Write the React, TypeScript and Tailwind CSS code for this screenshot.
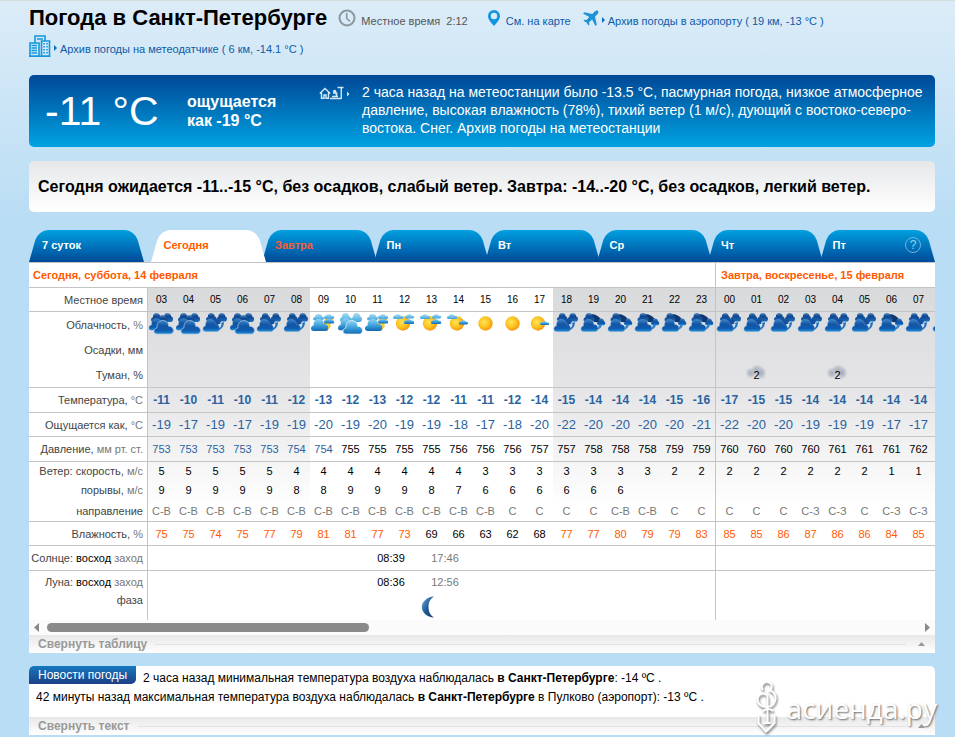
import React, { useState } from 'react';

type Sky = 'overcast' | 'cloudy' | 'broken' | 'dayOvercast' | 'dayCloudy' | 'sunHazy' | 'sunPartly' | 'sun' | 'sunSmall';

interface Hour {
    hour: string;
    sky: Sky;
    fog?: string;
    temp: string;
    feels: string;
    pressure: string;
    wind: string;
    gust: string;
    dir: string;
    humidity: string;
}

const TABS = ['7 суток', 'Сегодня', 'Завтра', 'Пн', 'Вт', 'Ср', 'Чт', 'Пт'];

const list = (s: string) => s.split(' ');

const HOURS = list('03 04 05 06 07 08 09 10 11 12 13 14 15 16 17 18 19 20 21 22 23 00 01 02 03 04 05 06 07');
const TEMPS = list('-11 -10 -11 -10 -11 -12 -13 -12 -13 -12 -12 -11 -11 -12 -14 -15 -14 -14 -14 -15 -16 -17 -15 -15 -14 -14 -14 -14 -14');
const FEELS = list('-19 -17 -19 -17 -19 -19 -20 -19 -20 -19 -19 -18 -17 -18 -20 -22 -20 -20 -20 -20 -21 -22 -20 -20 -19 -19 -19 -17 -17');
const PRESSURE = list('753 753 753 753 753 754 754 755 755 755 755 756 756 756 757 757 758 758 758 759 759 760 760 760 760 761 761 761 762');
const WIND = list('5 5 5 5 5 4 4 4 4 4 4 4 3 3 3 3 3 3 3 2 2 2 2 2 2 2 2 1 1');
const GUSTS = list('9 9 9 9 9 8 8 9 9 9 8 7 6 6 6 6 6 6');
const DIRS = list('С-В С-В С-В С-В С-В С-В С-В С-В С-В С-В С-В С-В С-В С С С С С-В С-В С С С С С С-З С-З С С-З С-З');
const HUMIDITY = list('75 75 74 75 77 79 81 81 77 73 69 66 63 62 68 77 77 80 79 79 83 85 85 86 87 86 86 84 85');
const SKIES: Sky[] = [
    'overcast', 'overcast', 'cloudy', 'overcast', 'cloudy', 'cloudy',
    'dayCloudy', 'dayOvercast', 'dayCloudy', 'sunHazy', 'sunHazy', 'sunPartly', 'sun', 'sun', 'sunSmall',
    'cloudy', 'broken', 'broken', 'broken', 'broken', 'broken',
    'cloudy', 'cloudy', 'cloudy', 'cloudy', 'cloudy', 'cloudy', 'broken', 'cloudy',
];

const DATA: Hour[] = HOURS.map((hour, i) => ({
    hour,
    sky: SKIES[i],
    fog: i === 22 || i === 25 ? '2' : undefined,
    temp: TEMPS[i],
    feels: FEELS[i],
    pressure: PRESSURE[i],
    wind: WIND[i],
    gust: GUSTS[i] ?? '',
    dir: DIRS[i],
    humidity: HUMIDITY[i],
}));

// index of the first hour of tomorrow
const SPLIT = 21;

const Gradients: React.FC = () => (
    <svg className="absolute h-0 w-0" aria-hidden="true">
        <defs>
            <linearGradient id="night" x1="0" y1="0" x2="0" y2="1">
                <stop offset="0" stopColor="#3a83c6" />
                <stop offset=".4" stopColor="#1255a4" />
                <stop offset=".75" stopColor="#0f5cb0" />
                <stop offset="1" stopColor="#2191da" />
            </linearGradient>
            <linearGradient id="nightBack" x1="0" y1="0" x2="0" y2="1">
                <stop offset="0" stopColor="#5b93c6" />
                <stop offset=".35" stopColor="#0f458e" />
                <stop offset="1" stopColor="#1b6cb8" />
            </linearGradient>
            <linearGradient id="day" x1="0" y1="0" x2="0" y2="1">
                <stop offset="0" stopColor="#8fd4f5" />
                <stop offset=".55" stopColor="#3c9fda" />
                <stop offset="1" stopColor="#1368b4" />
            </linearGradient>
            <linearGradient id="dayBack" x1="0" y1="0" x2="0" y2="1">
                <stop offset="0" stopColor="#a9def5" />
                <stop offset="1" stopColor="#3fa5dc" />
            </linearGradient>
            <radialGradient id="sun" cx=".4" cy=".4" r=".6">
                <stop offset="0" stopColor="#ffe45c" />
                <stop offset=".6" stopColor="#fcc21c" />
                <stop offset="1" stopColor="#f79a12" />
            </radialGradient>
            <radialGradient id="fog">
                <stop offset="0" stopColor="#a4abb8" />
                <stop offset=".5" stopColor="#b6bbc6" stopOpacity=".8" />
                <stop offset="1" stopColor="#c9ccd3" stopOpacity="0" />
            </radialGradient>
            <linearGradient id="moon" x1="0" y1="0" x2="1" y2="1">
                <stop offset="0" stopColor="#7db4dc" />
                <stop offset=".5" stopColor="#1d5a96" />
                <stop offset="1" stopColor="#0d3c70" />
            </linearGradient>
        </defs>
    </svg>
);

const BIG = 'M3 13C1 13 0 12 0 10.5 0 8.800 1 7.600 2.800 7.300 2.400 3 4.600.5 8 .5s5.500 2 5.600 5.300C16.300 5.800 18 7.500 18 9.800c0 2-1.200 3.200-3 3.200z';
const PUFF = 'M2.500 9C1 9 0 8 0 6.700 0 5.400.8 4.500 2 4.200 1.800 1.600 3.300 0 5.500 0s3.600 1.400 3.700 3.600C10.400 3.800 11 4.800 11 6.200 11 7.900 10 9 8.500 9z';
const FLAT = 'M1.500 5C.5 5 0 4.400 0 3.500 0 2.400.9 1.700 2 1.800 2.600.6 3.800 0 5.200.2 6.600.3 7.400 1 7.800 1.900 9.200 1.600 10.200 2.300 10.200 3.400c0 1-.6 1.600-1.600 1.600z';

const SkyIcon: React.FC<{ sky: Sky }> = ({ sky }) => {
    const drawing = () => {
        switch (sky) {
            case 'overcast':
                return (
                    <>
                        <path d={PUFF} fill="url(#nightBack)" transform="translate(3 1)" />
                        <path d={PUFF} fill="url(#nightBack)" transform="translate(14 1)" />
                        <path d={PUFF} fill="url(#nightBack)" transform="translate(9 3)" />
                        <path d={BIG} fill="url(#night)" transform="translate(1 6) scale(.95)" />
                        <path d={BIG} fill="url(#night)" stroke="#a9c4e0" strokeWidth=".7" transform="translate(6 8) scale(1.08)" />
                    </>
                );
            case 'cloudy':
                return (
                    <>
                        <path d={PUFF} fill="url(#nightBack)" transform="translate(4 1) scale(.95)" />
                        <path d={PUFF} fill="url(#nightBack)" transform="translate(14.500 1) scale(.95)" />
                        <path d="M10 7c4 0 8 0 9 2l-3 7h-5z" fill="#1450a0" />
                        <path d="M15.500 18.500c4-1 6.500-4 6.500-8.500l-3 1-3 4z" fill="#2272bd" />
                        <path d="M14.500 17c3 0 5-2 5-5.500l-3.500 1z" fill="#dbe4ee" />
                        <path d={BIG} fill="url(#night)" stroke="#6c9fd0" strokeWidth=".4" transform="translate(1 7) scale(.92 .96)" />
                    </>
                );
            case 'broken':
                return (
                    <>
                        <path d="M11 2c5 0 9 3 11 7l-6 2-6-4z" fill="#10366f" />
                        <path d={PUFF} fill="url(#nightBack)" transform="translate(3.500 1)" />
                        <path d="M14.500 10l5.500 1c0 3-1 5-3 6z" fill="#e6ecf4" />
                        <path d="M17 18c3-1 5-3 5-6l-3 1z" fill="#3a83c6" />
                        <path d={PUFF} fill="url(#night)" transform="translate(17 6.500) scale(.75)" />
                        <path d={BIG} fill="url(#night)" stroke="#6c9fd0" strokeWidth=".4" transform="translate(1 7) scale(.94 .96)" />
                    </>
                );
            case 'dayOvercast':
                return (
                    <>
                        <path d={PUFF} fill="url(#dayBack)" transform="translate(3 1)" />
                        <path d={PUFF} fill="url(#dayBack)" transform="translate(14 1)" />
                        <path d={BIG} fill="url(#day)" transform="translate(1 6) scale(.95)" />
                        <path d={BIG} fill="url(#day)" stroke="#e3f4fc" strokeWidth=".7" transform="translate(6 8) scale(1.08)" />
                    </>
                );
            case 'dayCloudy':
                return (
                    <>
                        <path d="M15 7h8l-3 6 1 1-4 5-4-3z" fill="url(#sun)" />
                        <path d={PUFF} fill="url(#dayBack)" transform="translate(3 2) scale(1 .7)" />
                        <path d={FLAT} fill="url(#dayBack)" transform="translate(14 2)" />
                        <path d={FLAT} fill="url(#day)" transform="translate(14 6.500)" />
                        <path d={BIG} fill="url(#day)" transform="translate(1 6.500) scale(.96)" />
                    </>
                );
            case 'sunHazy':
                return (
                    <>
                        <circle cx="12" cy="11.500" r="7.200" fill="url(#sun)" />
                        <path d={FLAT} fill="url(#dayBack)" transform="translate(2 2)" />
                        <path d={FLAT} fill="url(#dayBack)" transform="translate(14 2) scale(.9)" />
                        <path d={FLAT} fill="url(#day)" transform="translate(13 7)" />
                    </>
                );
            case 'sunPartly':
                return (
                    <>
                        <circle cx="12" cy="11.500" r="7.200" fill="url(#sun)" />
                        <path d={FLAT} fill="url(#dayBack)" transform="translate(2 2)" />
                        <path d={FLAT} fill="url(#day)" transform="translate(14 8) scale(.9)" />
                    </>
                );
            case 'sunSmall':
                return (
                    <>
                        <circle cx="12" cy="11.500" r="7.200" fill="url(#sun)" />
                        <path d={FLAT} fill="url(#day)" transform="translate(14 9) scale(.9 .8)" />
                    </>
                );
            default:
                return <circle cx="13.500" cy="11.500" r="7.200" fill="url(#sun)" />;
        }
    };

    return (
        <svg viewBox="0 0 27 24" className="block h-6 w-[27px]" aria-hidden="true">
            {drawing()}
        </svg>
    );
};

const ClockIcon: React.FC = () => (
    <svg viewBox="0 0 18 18" className="h-[18px] w-[18px]" fill="none" stroke="#8e979e" strokeWidth="2">
        <circle cx="9" cy="9" r="7.500" />
        <path d="M8.700 4v5.500l3.300 2.800" strokeWidth="1.600" />
    </svg>
);

const PinIcon: React.FC = () => (
    <svg viewBox="0 0 12 16" className="h-4 w-3">
        <path fillRule="evenodd" fill="#1295de" d="M6 0a6 6 0 0 0-6 6c0 3.500 3 6.500 6 10 3-3.500 6-6.500 6-10a6 6 0 0 0-6-6zm0 2.800a3.200 3.200 0 1 1 0 6.400 3.200 3.200 0 0 1 0-6.400z" />
    </svg>
);

const PlaneIcon: React.FC = () => (
    <svg viewBox="0 0 16 16" className="h-4 w-4" fill="#1b93d6">
        <path d="M15 1c-.9-.8-2.300-.3-3.300.6L9.300 4 1.300 2.200 0 3.400 6.300 7 3.600 10 1.400 9.700.5 10.700l3 1.800 1.900 3 1-.9-.3-2.300 3-2.700L12.500 16l1.300-1.300L12 6.600l2.400-2.400C15.300 3.300 15.800 1.800 15 1z" />
    </svg>
);

const BuildingsIcon: React.FC = () => (
    <svg viewBox="0 0 22 22" className="h-[22px] w-[22px]" fill="none" stroke="#1597dc" strokeWidth="1.600">
        <path d="M1 21V8h9v13zM12.500 21V6H20.500v15zM6 8V1h10v5M0 21.300h21.500" />
        <path d="M2.500 10.500h5.500M2.500 13h5.500M2.500 15.500h5.500M2.500 18h5.500M8 4h6" strokeWidth="1.300" />
        <path d="M15 8v11M18 8v11" strokeDasharray="1.500 1.500" strokeWidth="1.600" />
    </svg>
);

const StationIcon: React.FC = () => (
    <svg viewBox="0 0 32 14" className="h-[14px] w-8" fill="none" stroke="#d3e6f5" strokeWidth="1.400">
        <path d="M.8 7.500L6 2.500l5.200 5M2.500 6.500V12.300h2.500V9h2v3.300h2.500V6.500" />
        <path d="M11 12.500h11M13 10.500h6M14 7h3.500v4" strokeWidth="1.700" />
        <circle cx="15.700" cy="5.500" r="1" fill="#d3e6f5" />
        <path d="M22.300 13V2M18.500 1.500h6" />
        <path d="M28 5.500v5l2.500-2.500z" fill="#d3e6f5" stroke="none" />
    </svg>
);

const Caret: React.FC = () => (
    <svg viewBox="0 0 3 6" className="mt-1 h-[6px] w-[3px]"><path d="M0 0l3 3-3 3z" fill="#0d6fb8" /></svg>
);

const Watermark: React.FC = () => (
    <div className="pointer-events-none absolute -right-[2px] bottom-0 flex items-center gap-2" aria-hidden="true">
        <svg viewBox="0 0 24 54" className="h-[54px] w-6 drop-shadow-[1px_2px_1px_#777]" fill="none" stroke="#fff" strokeWidth="2">
            <path d="M8 9A5 5 0 1 1 15 9.500C19 11 21 14 20.500 18 20 22 17 25.500 12.500 26 7 26.500 2.500 23 2.500 18.500 2.500 15 5 12.500 8 12.500 11 12.500 12.500 15 12.500 17v24" />
            <path d="M8 30c3-2.500 7-2.500 10 0M3.500 33.500v8.500L11 50.500l8.500-8.500v-8.500M8.500 42h7" />
        </svg>
        <span className="font-['Open_Sans','Noto_Sans',sans-serif] text-[28px] leading-[40px] text-white [text-shadow:1px_1px_2px_#666]">асиенда.ру</span>
    </div>
);

const CollapseBar: React.FC<{ label: string; onClick: () => void }> = ({ label, onClick }) => (
    <button onClick={onClick} className="flex h-[18px] w-full items-center gap-2 bg-linear-to-b from-[#e8e8e8] to-white pr-[10px] pl-[9px] text-left text-[12px] leading-[18px] font-bold text-[#999]">
        {label}
        <span className="h-px grow bg-[#e2e2e2]"></span>
        <svg viewBox="0 0 7 4" className="ml-1 h-1 w-[7px]"><path d="M3.500 0L7 4H0z" fill="#999" /></svg>
    </button>
);

interface RowProps {
    label: React.ReactNode;
    height: string;
    line?: boolean;
    cellClass?: string;
    extra?: React.ReactNode;
    render: (h: Hour) => React.ReactNode;
}

const LABEL = 'border-r border-[#c4c4c4] pr-1 text-right text-[11px] font-normal whitespace-nowrap text-[#444]';

const Row: React.FC<RowProps> = ({ label, height, line, cellClass = '', extra, render }) => (
    <tr className={height}>
        <th scope="row" className={`${LABEL} ${line ? 'border-b' : ''}`}>{label}</th>
        {DATA.map((h, i) => (
            <td key={i} className={`border-[#c4c4c4] p-0 text-center ${line ? 'border-b' : ''} ${i === SPLIT ? 'border-l' : ''} ${cellClass}`}>
                {render(h)}
            </td>
        ))}
        <td className={`border-[#c4c4c4] p-0 ${line ? 'border-b' : ''} ${cellClass}`}>{extra}</td>
    </tr>
);

const Unit: React.FC<{ children: React.ReactNode }> = ({ children }) => <span className="text-[#777]">{children}</span>;

const RiseSet: React.FC<{ name: string; rise: string; set: string; height: string; line?: boolean }> = ({ name, rise, set, height, line }) => {
    const border = `border-[#c4c4c4] p-0 text-center text-[11px] ${line ? 'border-b' : ''}`;
    return (
        <tr className={height}>
            <th scope="row" className={`${LABEL} ${line ? 'border-b' : ''}`}>{name}: <span className="text-black">восход</span> <Unit>заход</Unit></th>
            <td colSpan={8} className={border}></td>
            <td colSpan={2} className={border}>{rise}</td>
            <td colSpan={2} className={`${border} text-[#777]`}>{set}</td>
            <td colSpan={9} className={border}></td>
            <td colSpan={9} className={`${border} border-l`}></td>
        </tr>
    );
};

const NIGHT = 'bg-[linear-gradient(to_bottom,#d9dadc_25px,#e5e5e7_125px,#ffffff_245px)]';

const ForecastTable: React.FC = () => (
    <div className="overflow-hidden bg-white">
        <table className="w-max border-separate border-spacing-0 text-[11px] leading-[14px] text-black">
            <colgroup><col className="w-[119px]" /></colgroup>
            {DATA.map((_, i) => {
                const night = i < 6 || i > 14;
                return <colgroup key={i}><col className={`${i === SPLIT ? 'w-[28px]' : 'w-[27px]'} ${night ? NIGHT : ''}`} /></colgroup>;
            })}
            <colgroup><col className={`w-[27px] ${NIGHT}`} /></colgroup>
            <tbody>
                <tr className="h-[25px]">
                    <th colSpan={22} className="border-b border-[#c4c4c4] bg-white px-1 text-left text-[11px] font-bold text-[#ff5a00]">Сегодня, суббота, 14 февраля</th>
                    <th colSpan={9} className="border-b border-l border-[#c4c4c4] bg-white px-[5px] text-left text-[11px] font-bold text-[#ff5a00]">Завтра, воскресенье, 15 февраля</th>
                </tr>
                <Row label="Местное время" height="h-6" line cellClass="text-[10px]" render={h => h.hour} />
                <Row label={<>Облачность, <Unit>%</Unit></>} height="h-[25px]" cellClass="align-top" extra={<SkyIcon sky="cloudy" />} render={h => <SkyIcon sky={h.sky} />} />
                <Row label="Осадки, мм" height="h-[25px]" render={() => null} />
                <Row
                    label="Туман, %"
                    height="h-[26px]"
                    line
                    render={h => h.fog && (
                        <div className="relative">
                            <svg viewBox="0 0 24 18" className="absolute -top-1 left-[1px] h-[18px] w-6">
                                <ellipse cx="7" cy="9" rx="6" ry="6" fill="url(#fog)" />
                                <ellipse cx="13" cy="6" rx="7" ry="6" fill="url(#fog)" />
                                <ellipse cx="17" cy="9" rx="6" ry="7" fill="url(#fog)" />
                            </svg>
                            <span className="relative">{h.fog}</span>
                        </div>
                    )}
                />
                <Row label={<>Температура, <Unit>°C</Unit></>} height="h-[25px]" line cellClass="text-[12px] font-bold text-[#2a639f]" render={h => h.temp} />
                <Row label={<>Ощущается как, <Unit>°C</Unit></>} height="h-6" line cellClass="text-[13px] text-[#2a639f]" render={h => h.feels} />
                <Row
                    label={<>Давление, <Unit>мм рт. ст.</Unit></>}
                    height="h-[25px]"
                    line
                    render={h => <span className={Number(h.pressure) < 755 ? 'text-[#2a639f]' : ''}>{h.pressure}</span>}
                />
                <Row label={<>Ветер: скорость, <Unit>м/с</Unit></>} height="h-[18px]" render={h => h.wind} />
                <Row label={<>порывы, <Unit>м/с</Unit></>} height="h-5" render={h => h.gust} />
                <Row label="направление" height="h-[22px]" line cellClass="text-[#777]" render={h => h.dir} />
                <Row
                    label={<>Влажность, <Unit>%</Unit></>}
                    height="h-6"
                    line
                    render={h => <span className={Number(h.humidity) > 70 ? 'text-[#ff5a00]' : ''}>{h.humidity}</span>}
                />
                <RiseSet name="Солнце" rise="08:39" set="17:46" height="h-[25px]" line />
                <RiseSet name="Луна" rise="08:36" set="12:56" height="h-[22px]" />
                <tr className="h-[27px]">
                    <th scope="row" className={`${LABEL} align-top`}>фаза</th>
                    <td colSpan={10} className="p-0"></td>
                    <td className="p-0">
                        <svg viewBox="0 0 22 22" className="mx-auto block h-[22px] w-[22px]" role="img" aria-label="Растущая луна">
                            <path d="M13 .5C6 1 .8 5.500.8 11S6 21 13 21.500C9 19 7.500 15.500 7.500 11S9 3 13 .5z" fill="url(#moon)" />
                        </svg>
                    </td>
                    <td colSpan={10} className="p-0"></td>
                    <td colSpan={9} className="border-l border-[#c4c4c4] p-0"></td>
                </tr>
            </tbody>
        </table>
    </div>
);

const App: React.FC = () => {
    const [activeTab, setActiveTab] = useState('Сегодня');
    const [tableOpen, setTableOpen] = useState(true);
    const [newsOpen, setNewsOpen] = useState(true);

    const tabFill = (tab: string) => tab === activeTab
        ? 'z-10 text-[#ff5a00] before:bg-white after:bg-white'
        : `${tab === 'Завтра' ? 'text-[#ff5a36]' : 'text-white'} before:bg-linear-to-b before:from-[#00a0e0] before:to-[#004a98] after:bg-linear-to-b after:from-[#00a0e0] after:to-[#004a98]`;

    const tabMargin = (i: number) => {
        if (i === 0) return '';
        if (i === 1) return 'ml-[6px]';
        return '-ml-1';
    };

    return (
        <div className="min-h-screen border-t border-[#d5dcdc] bg-[#b9ddf4] bg-[linear-gradient(to_bottom,#dcecf8,#b9ddf4_220px)] bg-no-repeat pr-5 pb-[2px] pl-[29px] font-['Liberation_Sans',Arial,sans-serif] text-[11px]">
            <Gradients />
            <header className="flex h-[74px] flex-col gap-[5px] pt-[5px]">
                <div className="flex h-6 items-center whitespace-nowrap">
                    <h1 className="text-[22px] leading-6 font-bold text-black">Погода в Санкт-Петербурге</h1>
                    <span className="ml-[11px]"><ClockIcon /></span>
                    <p className="mt-[6px] ml-[5px] text-[#555]">Местное время&nbsp; 2:12</p>
                    <a href="#map" className="ml-5 flex items-center gap-[6px] text-[#0d5ba6]">
                        <PinIcon />
                        <span className="mt-[6px]">См. на карте</span>
                    </a>
                    <a href="#airport" className="ml-3 flex items-center gap-[3px] text-[#0d5ba6]">
                        <PlaneIcon />
                        <Caret />
                        <span className="mt-[6px]">Архив погоды в аэропорту ( 19 км, -13 °C )</span>
                    </a>
                </div>
                <a href="#sensor" className="flex items-center gap-[3px] text-[#0d5ba6]">
                    <BuildingsIcon />
                    <Caret />
                    <span className="mt-[6px]">Архив погоды на метеодатчике ( 6 км, -14.1 °C )</span>
                </a>
            </header>

            <section className="flex h-[72px] items-start rounded-[5px] bg-linear-to-b from-[#004896] to-[#00a3e2] text-white">
                <div className="w-[158px] shrink-0 pt-3 pl-4 text-[41px] leading-[48px] whitespace-nowrap">-11 °C</div>
                <div className="w-[132px] shrink-0 pt-[17px] text-[16px] leading-[19px] font-bold">ощущается<br />как -19 °C</div>
                <a href="#station" className="flex items-start gap-[11px] pr-2">
                    <span className="shrink-0 pt-[11px]"><StationIcon /></span>
                    <span className="pt-2 text-[14px] leading-[18px]">
                        2 часа назад на метеостанции было -13.5 °C, пасмурная погода, низкое атмосферное давление, высокая влажность (78%), тихий ветер (1 м/с), дующий с востоко-северо-востока. Снег. Архив погоды на метеостанции
                    </span>
                </a>
            </section>

            <section className="mt-[14px] flex h-[51px] items-center rounded-[5px] bg-linear-to-b from-[#e6e7e9] to-white px-[9px] text-[16px] font-bold text-black">
                Сегодня ожидается -11..-15 °C, без осадков, слабый ветер. Завтра: -14..-20 °C, без осадков, легкий ветер.
            </section>

            <main className="mt-[18px]">
                <nav className="flex h-8">
                    {TABS.map((tab, i) => (
                        <button
                            key={tab}
                            onClick={() => setActiveTab(tab)}
                            className={`relative isolate flex flex-1 items-center justify-between pr-[14px] pb-[2px] pl-[13px] text-[11px] font-bold before:absolute before:inset-y-0 before:left-0 before:-z-10 before:w-3/5 before:origin-bottom before:-skew-x-[16deg] before:rounded-tl-[10px] after:absolute after:inset-y-0 after:right-0 after:-z-10 after:w-3/5 after:origin-bottom after:skew-x-[16deg] after:rounded-tr-[10px] ${tabMargin(i)} ${tabFill(tab)}`}
                        >
                            {tab}
                            {i === 7 && (
                                <span className="flex h-4 w-4 items-center justify-center rounded-full border border-[#6fb4e0] text-[12px] font-normal text-[#9fd0ee]">?</span>
                            )}
                        </button>
                    ))}
                </nav>
                <div className="border-t border-[#c4c4c4] bg-white">
                    {tableOpen && (
                        <>
                            <ForecastTable />
                            <div className="flex h-[15px] items-center gap-2 bg-[#fbfbfb] px-[5px]">
                                <svg viewBox="0 0 5 9" className="h-[9px] w-[5px]"><path d="M5 0v9L0 4.500z" fill="#8a8a8a" /></svg>
                                <div className="h-[9px] grow">
                                    <div className="h-[9px] w-[37%] rounded-full bg-[#8a8a8a]"></div>
                                </div>
                                <svg viewBox="0 0 5 9" className="h-[9px] w-[5px]"><path d="M0 0v9l5-4.500z" fill="#8a8a8a" /></svg>
                            </div>
                        </>
                    )}
                    <CollapseBar label={tableOpen ? 'Свернуть таблицу' : 'Развернуть таблицу'} onClick={() => setTableOpen(!tableOpen)} />
                </div>
            </main>

            <section className="relative mt-[13px] rounded-t-[5px] bg-white text-[12px] text-black">
                <div className="flex items-start gap-[7px]">
                    <h2 className="h-[18px] rounded-tl-[5px] rounded-br-[5px] bg-linear-to-b from-[#1279be] to-[#1c3f85] px-[9px] leading-[18px] text-white">Новости погоды</h2>
                    <p className="pt-[3px] leading-[19px]">2 часа назад минимальная температура воздуха наблюдалась <b>в Санкт-Петербурге</b>: -14 ºC .</p>
                </div>
                {newsOpen && (
                    <p className="pb-[10px] pl-[7px] leading-[19px]">42 минуты назад максимальная температура воздуха наблюдалась <b>в Санкт-Петербурге</b> в Пулково (аэропорт): -13 ºC .</p>
                )}
                <CollapseBar label={newsOpen ? 'Свернуть текст' : 'Развернуть текст'} onClick={() => setNewsOpen(!newsOpen)} />
                <Watermark />
            </section>
        </div>
    );
};

export default App;
